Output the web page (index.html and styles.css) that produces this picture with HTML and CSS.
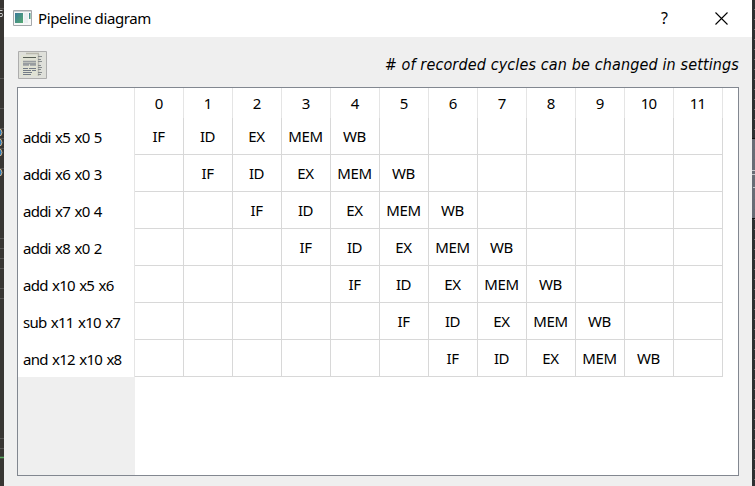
FILE: index.html
```html
<!DOCTYPE html>
<html lang="en">
<head>
<meta charset="utf-8">
<title>Pipeline diagram</title>
<link rel="stylesheet" href="styles.css">
</head>
<body>
<div class="desktop">
<svg class="edge-left" width="4" height="486" viewBox="0 0 4 486">
  <path d="M0 8.5h4M0 78.5h4M0 108.500h4M0 128.500h4M0 138.500h4M0 148.500h4M0 168.500h4M0 238.500h4M0 248.500h4M0 258.500h4M0 268.500h4M0 288.500h4M0 298.500h4M0 438.500h4M0 448.500h4" stroke="#565452"/>
  <path d="M0 457.500h4" stroke="#58a85f" stroke-width="1.500"/>
  <path d="M0 10.500h2.500M0 13.500h2q1 1 0 3H0" fill="none" stroke="#c8c8c8"/>
  <g fill="#2f79b5" stroke="#c9b391"><path d="M-2 129.500h3l1 3-1 3h-3zM-2 139.500h3l1 3-1 3h-3zM-2 149.500h3l1 3-1 3h-3zM-2 169.500h3l1 3-1 3h-3z"/></g>
</svg>
<main class="window">
  <header class="titlebar">
    <svg class="app-icon" width="19" height="16" viewBox="0 0 19 16">
      <defs><linearGradient id="g" x2="1" y2="1"><stop stop-color="#397a9a"/><stop offset="1" stop-color="#55aa70"/></linearGradient></defs>
      <path d="M.5.5h18v15H.5z" fill="#f7f8f8" stroke="#a4a8ab"/>
      <path d="M1 1h17v1H1z" fill="#cdd2d4"/>
      <path d="M2 3h8v10H2z" fill="url(#g)"/>
      <path d="M11 3h4v10h-4z" fill="#e9eef0"/>
      <path d="M16 3h1.500v6H16z" fill="url(#g)"/>
    </svg>
    <h1>Pipeline diagram</h1>
    <span class="help">?</span>
    <svg class="close" width="13" height="13" viewBox="0 0 13 13"><path d="M.5.5l12 12M12.500.5l-12 12" stroke="#000" stroke-width="1.100"/></svg>
  </header>
  <div class="toolbar">
    <svg width="29" height="28" viewBox="0 0 29 28">
      <path d="M.5.5h28v27H.5z" fill="#dfe0da" stroke="#adadad"/>
      <path d="M8 2.500h13M20.500 3v22" fill="none" stroke="#b9b8ac" stroke-width="1.500"/>
      <path d="M3 4h16v21H3z" fill="#e0e2d4"/>
      <path d="M5 6.500h13" stroke="#596057"/>
      <path d="M5 10.500h13M5 12.500h13M5 14h6M12 14h6" stroke="#989da0" stroke-width="1.400"/>
      <path d="M5 17.500h5M11 17.500h7M5 19.500h8M14 19.500h4M5 21.500h9M5 23.500h8" stroke="#737b87"/>
      <path d="M20 5.500h4M20 8.500h3M20 10.500h4M20 14.500h3M20 16.500h4M20 18.500h3M20 21.500h4M20 23.500h3" stroke="#858b8d"/>
    </svg>
    <span class="hint"># of recorded cycles can be changed in settings</span>
  </div>
  <section class="view">
    <table>
      <colgroup><col class="names"><col span="12"></colgroup>
      <thead><tr><th></th><th>0</th><th>1</th><th>2</th><th>3</th><th>4</th><th>5</th><th>6</th><th>7</th><th>8</th><th>9</th><th>10</th><th>11</th></tr></thead>
      <tbody>
        <tr><th>addi x5 x0 5</th><td>IF</td><td>ID</td><td>EX</td><td>MEM</td><td>WB</td><td></td><td></td><td></td><td></td><td></td><td></td><td></td></tr>
        <tr><th>addi x6 x0 3</th><td></td><td>IF</td><td>ID</td><td>EX</td><td>MEM</td><td>WB</td><td></td><td></td><td></td><td></td><td></td><td></td></tr>
        <tr><th>addi x7 x0 4</th><td></td><td></td><td>IF</td><td>ID</td><td>EX</td><td>MEM</td><td>WB</td><td></td><td></td><td></td><td></td><td></td></tr>
        <tr><th>addi x8 x0 2</th><td></td><td></td><td></td><td>IF</td><td>ID</td><td>EX</td><td>MEM</td><td>WB</td><td></td><td></td><td></td><td></td></tr>
        <tr><th>add x10 x5 x6</th><td></td><td></td><td></td><td></td><td>IF</td><td>ID</td><td>EX</td><td>MEM</td><td>WB</td><td></td><td></td><td></td></tr>
        <tr><th>sub x11 x10 x7</th><td></td><td></td><td></td><td></td><td></td><td>IF</td><td>ID</td><td>EX</td><td>MEM</td><td>WB</td><td></td><td></td></tr>
        <tr><th>and x12 x10 x8</th><td></td><td></td><td></td><td></td><td></td><td></td><td>IF</td><td>ID</td><td>EX</td><td>MEM</td><td>WB</td><td></td></tr>
      </tbody>
    </table>
    <div class="header-rest"></div>
  </section>
</main>
<svg class="edge-right" width="3" height="486" viewBox="0 0 3 486">
  <path d="M2.500 9v477" stroke="#77797a" stroke-dasharray="1 9"/>
  <path d="M0 138h3v81H0z" fill="#686c75"/>
  <path d="M0 138.500h3M0 218.500h3" stroke="#111"/>
  <path d="M0 170.500h3M0 174.500h3M1 187.500h2" stroke="#c5c7cb"/>
</svg>
</div>
</body>
</html>
```

FILE: styles.css
```css
* { box-sizing: border-box; }
body { margin: 0; background: #fff; font: 15px/20px "Noto Sans", "Open Sans", sans-serif; color: #000; overflow: hidden; }
.desktop { display: grid; grid-template-columns: 4px 748px 3px; height: 486px; }
.edge-left { background: #383633; }
.edge-right { background: #2e3032; }
.window { display: flex; flex-direction: column; background: #efefef; }
.titlebar { display: flex; align-items: center; height: 37px; padding: 0 24px 0 9px; background: #fff; }
.titlebar h1 { margin: 0 auto 2px 6px; font-size: 15px; font-weight: 400; letter-spacing: -0.38px; }
.app-icon { margin-bottom: 2px; }
.help { margin: 0 47px 2px 0; font-size: 16px; }
.close { margin-bottom: 1px; }
.toolbar { display: flex; justify-content: space-between; align-items: center; height: 50px; padding: 6px 13px 0 14px; }
.hint { font: italic 16px/20px "DejaVu Sans Condensed", "DejaVu Sans", sans-serif; font-stretch: condensed; letter-spacing: 0.13px; white-space: nowrap; }
.view { width: 722px; height: 389px; margin-left: 13px; border: 1px solid #828790; background: #fff; display: flex; flex-direction: column; }
table { width: 705px; table-layout: fixed; border-collapse: separate; border-spacing: 0; }
col { width: 49px; }
.names { width: 117px; }
th, td { padding: 0; font-weight: 400; text-align: center; white-space: nowrap; }
thead th { height: 30px; padding: 1px 1px 1px 0; border-right: 1px solid #e5e5e5; letter-spacing: -0.9px; }
tbody th { height: 37px; padding: 1px 0 1px 5px; text-align: left; border-right: 1px solid #e5e5e5; letter-spacing: -0.75px; word-spacing: 1.2px; }
td { height: 37px; padding: 0 1px 1px 0; border-right: 1px solid #d8d8d8; border-bottom: 1px solid #d8d8d8; letter-spacing: -0.4px; }
.header-rest { flex: 1; width: 117px; background: #efefef; }
```
